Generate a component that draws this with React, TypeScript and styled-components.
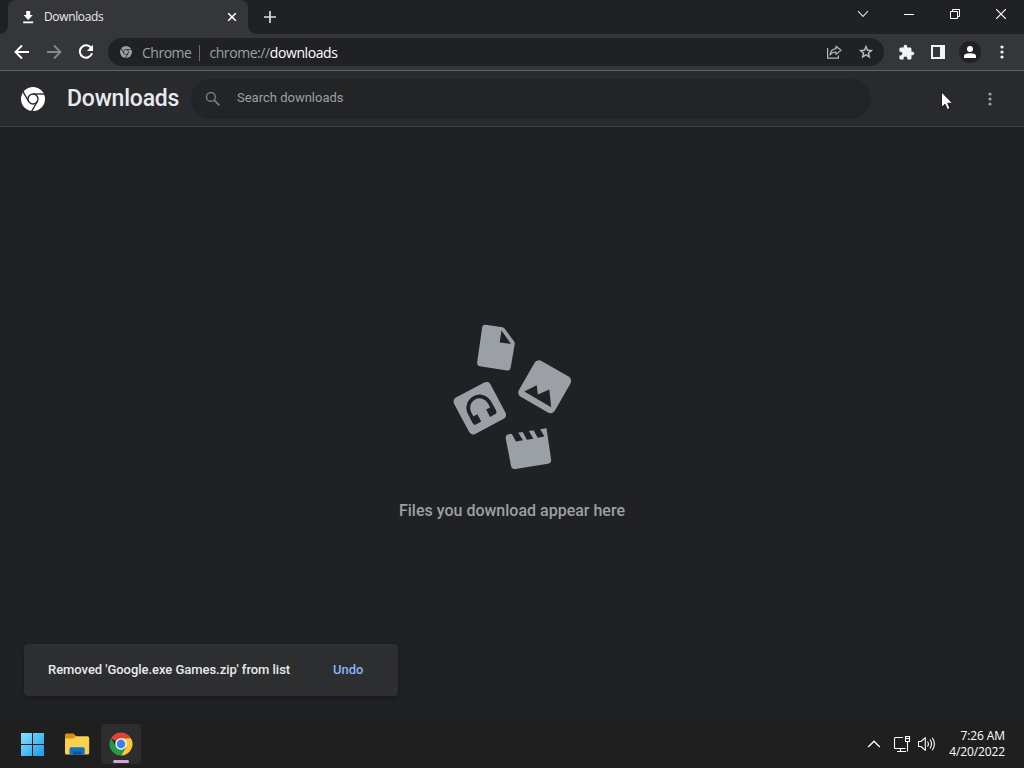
import React from 'react';
import styled, { createGlobalStyle } from 'styled-components';

const Global = createGlobalStyle`
  * { box-sizing: border-box; }
  html, body { margin: 0; background: #202124; overflow: hidden; }
  svg { display: block; flex: none; }
`;

const ui = `"Open Sans", "Noto Sans", sans-serif`;
const roboto = `Roboto, sans-serif`;

const Screen = styled.div`
  position: relative;
  display: flex;
  flex-direction: column;
  width: 1024px;
  height: 768px;
  overflow: hidden;
  background: #202124;
  color: #e8eaed;
`;

const TabStrip = styled.header`
  display: flex;
  height: 34px;
  padding-left: 8px;
  background: #202124;
`;

const Tab = styled.div`
  position: relative;
  display: flex;
  align-items: center;
  width: 240px;
  padding: 0 10px 0 14px;
  border-radius: 8px 8px 0 0;
  background: #35363a;
  font: 12px ${ui};

  &::before,
  &::after {
    content: '';
    position: absolute;
    bottom: 0;
    width: 8px;
    height: 8px;
  }
  &::before {
    left: -8px;
    background: radial-gradient(circle at 0 0, transparent 7.5px, #35363a 8px);
  }
  &::after {
    right: -8px;
    background: radial-gradient(circle at 100% 0, transparent 7.5px, #35363a 8px);
  }
`;

const TabTitle = styled.span`
  flex: 1;
  margin: -1px 0 0 9px;
  letter-spacing: -0.36px;
`;

const NewTab = styled.div`
  display: flex;
  align-items: center;
  margin-left: 14px;
`;

const WindowControls = styled.div`
  display: flex;
  align-items: center;
  height: 28px;
  margin-left: auto;
`;

const ControlButton = styled.div`
  display: flex;
  justify-content: center;
  width: 46px;
`;

const Toolbar = styled.div`
  display: flex;
  align-items: center;
  height: 37px;
  padding: 0 20px 0 14px;
  border-bottom: 1px solid #606164;
  background: #35363a;
`;

const Nav = styled.div`
  display: flex;
  gap: 16px;
`;

const Omnibox = styled.div`
  display: flex;
  align-items: center;
  width: 776px;
  height: 28px;
  margin-left: 14px;
  padding: 0 10px 0 12px;
  border-radius: 14px;
  background: #202124;
  color: #9aa0a6;
  font: 14px ${ui};
`;

const SiteName = styled.span`
  margin: 1px 0 0 10px;
  padding-right: 8px;
  border-right: 1px solid #6b6e72;
  line-height: 16px;
  letter-spacing: -0.5px;
`;

const Url = styled.span`
  flex: 1;
  margin: 1px 0 0 9px;
  line-height: 16px;
  letter-spacing: -0.42px;
  b { color: #fff; font-weight: 400; }
`;

const OmniboxActions = styled.div`
  display: flex;
  gap: 16px;
`;

const Extensions = styled.div`
  display: flex;
  align-items: center;
  gap: 15px;
  margin-left: 14px;
`;

const Avatar = styled.div`
  display: flex;
  align-items: center;
  justify-content: center;
  width: 22px;
  height: 22px;
  margin-left: -2px;
  border-radius: 50%;
  background: #202124;
`;

const PageHeader = styled.div`
  display: flex;
  align-items: center;
  height: 56px;
  padding: 0 32px 0 21px;
  border-bottom: 1px solid #3d3e41;
  background: #292a2d;
`;

const Title = styled.h1`
  width: 124px;
  margin: 0 0 0 22px;
  font: 500 23px/28px ${roboto};
  letter-spacing: -0.2px;
`;

const Search = styled.div`
  display: flex;
  align-items: center;
  width: 680px;
  height: 40px;
  padding-left: 14px;
  border-radius: 20px;
  background: #232426;
  color: #9aa0a6;
  font: 13px ${roboto};
`;

const SearchText = styled.span`
  margin: -3px 0 0 16px;
`;

const MenuSlot = styled.div`
  margin-left: auto;
`;

const Content = styled.main`
  display: flex;
  flex: 1;
  flex-direction: column;
  align-items: center;
  padding-top: 193px;
`;

const EmptyText = styled.p`
  margin: 26px 0 0;
  color: #9aa0a6;
  font: 500 16px/20px ${roboto};
`;

const Toast = styled.div`
  position: absolute;
  left: 24px;
  bottom: 72px;
  display: flex;
  align-items: center;
  width: 374px;
  height: 52px;
  padding: 0 24px 2px;
  border-radius: 4px;
  background: #2d2e30;
  box-shadow: 0 2px 5px rgba(0, 0, 0, 0.3);
  font: 500 13px ${roboto};
  white-space: nowrap;
`;

const ToastMessage = styled.span`
  width: 285px;
  letter-spacing: -0.04px;
`;

const Undo = styled.span`
  color: #8ab4f8;
`;

const Taskbar = styled.footer`
  display: flex;
  align-items: center;
  height: 48px;
  padding: 0 19px 0 13px;
  background: #1f1f1f;
`;

const TaskButton = styled.div<{ $active?: boolean }>`
  position: relative;
  display: flex;
  align-items: center;
  justify-content: center;
  width: 40px;
  height: 40px;
  margin-right: 4px;
  border-radius: 4px;
  background: ${(p) => (p.$active ? '#2d2d2d' : 'transparent')};

  &::after {
    content: '';
    display: ${(p) => (p.$active ? 'block' : 'none')};
    position: absolute;
    bottom: 1px;
    width: 16px;
    height: 3px;
    border-radius: 2px;
    background: #d5a2d8;
  }
`;

const Tray = styled.div`
  display: flex;
  align-items: center;
  gap: 12px;
  margin-left: auto;
`;

const Clock = styled.div`
  width: 58px;
  text-align: right;
  color: #fff;
  font: 12px/16px ${ui};
  letter-spacing: -0.12px;
`;

const Pointer = styled.svg`
  position: absolute;
  left: 940px;
  top: 91px;
`;

const MonoChrome = ({ size, fill, gap }: { size: number; fill: string; gap: string }) => (
  <svg width={size} height={size} viewBox="0 0 24 24">
    <circle cx="12" cy="12" r="12" fill={fill} />
    <g fill="none" stroke={gap} strokeWidth="1.4">
      <circle cx="12" cy="12" r="5" />
      {[0, 120, 240].map((a) => (
        <path key={a} d="M12 7H24" transform={`rotate(${a} 12 12)`} />
      ))}
    </g>
  </svg>
);

const Dots = ({ color }: { color: string }) => (
  <svg width="4" height="14" viewBox="0 0 4 14" fill={color}>
    <circle cx="2" cy="2" r="1.6" />
    <circle cx="2" cy="7" r="1.6" />
    <circle cx="2" cy="12" r="1.6" />
  </svg>
);

const Arrow = ({ color, flip }: { color: string; flip?: boolean }) => (
  <svg width="16" height="16" viewBox="0 0 16 16" fill="none" stroke={color} strokeWidth="1.9">
    <path d="M15 8H2.5M8 1.5L1.5 8L8 14.5" transform={flip ? 'rotate(180 8 8)' : undefined} />
  </svg>
);

const EmptyArt = () => (
  <svg width="124" height="155" viewBox="450 320 124 155" fill="#9aa0a6">
    <path
      d="M485.3 328L502 330.5L511.6 343.5L507.5 367.3L480.3 363Z"
      stroke="#9aa0a6"
      strokeWidth="6.4"
      strokeLinejoin="round"
    />
    <path d="M501.5 330.5L511 344L499.7 342.5Z" fill="#202124" />
    <rect x="524" y="366" width="41.4" height="41.4" rx="5" transform="rotate(30 544.7 386.7)" />
    <path d="M524.3 391.5L536.7 385.3L537.9 394.5L549.3 389.5L551.2 407.2Z" fill="#202124" />
    <g transform="translate(479.8 408.2) rotate(-28)">
      <rect x="-20.6" y="-20.6" width="41.2" height="41.2" rx="4.5" />
      <path d="M-11.3 10V-0.5A11.3 11.3 0 0 1 11.3 -0.5V10" fill="none" stroke="#202124" strokeWidth="3.7" />
      <path d="M-13.1 4.2H-5V12.5H-11Q-13.1 12.5 -13.1 10.3ZM13.1 4.2H5V12.5H11Q13.1 12.5 13.1 10.3Z" fill="#202124" />
    </g>
    <path d="M508.5 434.2L546.5 428.2L551.1 459.5Q551.5 463 548 463.7L515.3 469Q511.8 469.5 511 466L505.8 438.5Q505.3 435 508.5 434.2Z" />
    <path
      d="M511 432.5L517.5 431.5L523 440.3L516 441.6ZM522 430.8L528.2 429.8L533.3 438.8L526.8 439.8ZM533 429L539.5 428L544.4 436.6L537.7 437.8Z"
      fill="#202124"
    />
  </svg>
);

export default function App() {
  return (
    <Screen>
      <Global />
      <TabStrip>
        <Tab>
          <svg width="13" height="13" viewBox="0 0 13 13" fill="#fff">
            <path d="M4.2 0H8.2V4H10.8L6.2 8.9L1.6 4H4.2ZM1.2 10.6H11.2V12.2H1.2Z" />
          </svg>
          <TabTitle>Downloads</TabTitle>
          <svg width="12" height="12" viewBox="0 0 12 12" stroke="#fff" strokeWidth="1.6">
            <path d="M2.2 2.2L9.8 9.8M9.8 2.2L2.2 9.8" />
          </svg>
        </Tab>
        <NewTab>
          <svg width="16" height="16" viewBox="0 0 16 16" stroke="#dadce0" strokeWidth="1.7">
            <path d="M8 2V14M2 8H14" />
          </svg>
        </NewTab>
        <WindowControls>
          <ControlButton>
            <svg width="12" height="12" viewBox="0 0 12 12" fill="none" stroke="#dadce0" strokeWidth="1.1">
              <path d="M1 3.2L6 8.5L11 3.2" />
            </svg>
          </ControlButton>
          <ControlButton>
            <svg width="10" height="10" viewBox="0 0 10 10" fill="#fff">
              <path d="M0 5H10V6H0Z" />
            </svg>
          </ControlButton>
          <ControlButton>
            <svg width="10" height="10" viewBox="0 0 10 10" fill="none" stroke="#fff">
              <path d="M0.5 2.5H7.5V9.5H0.5ZM2.5 2.5V0.5H9.5V7.5H7.5" />
            </svg>
          </ControlButton>
          <ControlButton>
            <svg width="10" height="10" viewBox="0 0 10 10" stroke="#fff" strokeWidth="1.2">
              <path d="M0 0L10 10M10 0L0 10" />
            </svg>
          </ControlButton>
        </WindowControls>
      </TabStrip>

      <Toolbar>
        <Nav>
          <Arrow color="#fff" />
          <Arrow color="#85878a" flip />
          <svg width="16" height="16" viewBox="0 0 16 16">
            <path d="M13.3 4.2A6.2 6.2 0 1 0 14 9.3" fill="none" stroke="#fff" strokeWidth="2" />
            <path d="M15 0.8V7H8.8Z" fill="#fff" />
          </svg>
        </Nav>
        <Omnibox>
          <MonoChrome size={12} fill="#9aa0a6" gap="#202124" />
          <SiteName>Chrome</SiteName>
          <Url>
            chrome://<b>downloads</b>
          </Url>
          <OmniboxActions>
            <svg width="16" height="16" viewBox="0 0 16 16" fill="none" stroke="#b4b7bb" strokeWidth="1.2">
              <path d="M1.6 4V14.2H12.4V11.5" />
              <path d="M10 2.2L15 6.3L10 10.4V8Q6.2 7.8 4 11Q4.6 5.4 10 4.7Z" strokeLinejoin="round" />
            </svg>
            <svg width="16" height="16" viewBox="0 0 24 24" fill="#c4c7cb">
              <path d="M22 9.24l-7.19-.62L12 2 9.19 8.63 2 9.24l5.46 4.73L5.82 21 12 17.27 18.18 21l-1.63-7.03L22 9.24zM12 15.4l-3.76 2.27 1-4.28-3.32-2.88 4.38-.38L12 6.1l1.71 4.04 4.38.38-3.32 2.88 1 4.28L12 15.4z" stroke="#c4c7cb" strokeWidth="0.5" />
            </svg>
          </OmniboxActions>
        </Omnibox>
        <Extensions>
          <svg width="17" height="17" viewBox="0 0 24 24" fill="#f1f3f4">
            <path d="M20.5 11H19V7c0-1.1-.9-2-2-2h-4V3.5a2.5 2.5 0 0 0-5 0V5H4c-1.1 0-1.99.9-1.99 2v3.8H3.5c1.49 0 2.7 1.21 2.7 2.7s-1.21 2.7-2.7 2.7H2V20c0 1.1.9 2 2 2h3.8v-1.5c0-1.49 1.21-2.7 2.7-2.7s2.7 1.21 2.7 2.7V22H17c1.1 0 2-.9 2-2v-4h1.5a2.5 2.5 0 0 0 0-5z" />
          </svg>
          <svg width="16" height="16" viewBox="0 0 16 16" fill="#f1f3f4">
            <path fillRule="evenodd" d="M1 1H15V15H1ZM3 3V13H10V3Z" />
          </svg>
          <Avatar>
            <svg width="14" height="14" viewBox="0 0 14 14" fill="#fff">
              <circle cx="7" cy="4" r="3" />
              <path d="M1 13V11Q1 8.2 7 8.2Q13 8.2 13 11V13Z" />
            </svg>
          </Avatar>
        </Extensions>
        <MenuSlot>
          <Dots color="#f1f3f4" />
        </MenuSlot>
      </Toolbar>

      <PageHeader>
        <MonoChrome size={24} fill="#fff" gap="#292a2d" />
        <Title>Downloads</Title>
        <Search>
          <svg width="16" height="16" viewBox="0 0 16 16" fill="none" stroke="#777a7e">
            <circle cx="5.9" cy="5.9" r="4.4" strokeWidth="1.5" />
            <path d="M9.2 9.2L14.4 14.4" strokeWidth="1.9" />
          </svg>
          <SearchText>Search downloads</SearchText>
        </Search>
        <MenuSlot>
          <Dots color="#9aa0a6" />
        </MenuSlot>
      </PageHeader>

      <Content>
        <EmptyArt />
        <EmptyText>Files you download appear here</EmptyText>
      </Content>

      <Toast>
        <ToastMessage>Removed 'Google.exe Games.zip' from list</ToastMessage>
        <Undo>Undo</Undo>
      </Toast>

      <Taskbar>
        <TaskButton>
          <svg width="24" height="24" viewBox="0 0 24 24">
            <defs>
              <linearGradient id="win" x1="0" y1="0" x2="24" y2="24" gradientUnits="userSpaceOnUse">
                <stop stopColor="#8be3fc" />
                <stop offset="1" stopColor="#159be8" />
              </linearGradient>
            </defs>
            <path d="M0 1H11V12H0ZM12 1H23V12H12ZM0 13H11V24H0ZM12 13H23V24H12Z" fill="url(#win)" />
          </svg>
        </TaskButton>
        <TaskButton>
          <svg width="26" height="24" viewBox="0 0 26 24">
            <path d="M1 3Q1 1.5 2.5 1.5H9.5L12.5 4.5V9H1Z" fill="#d9920e" />
            <path d="M1 6.5H9.5L12 4.3H23.5Q25.2 4.3 25.2 6V21Q25.2 22.5 23.5 22.5H2.5Q1 22.5 1 21Z" fill="#fbd04c" />
            <path d="M5.5 22.5V17Q5.5 15.3 7.2 15.3H19Q20.7 15.3 20.7 17V22.5Z" fill="#1273c4" />
            <path d="M9 22.5V19.5H17.3V22.5Z" fill="#0b559c" />
          </svg>
        </TaskButton>
        <TaskButton $active>
          <svg width="24" height="24" viewBox="0 0 24 24">
            <path d="M12 12L2.04 6.25A11.5 11.5 0 0 1 21.96 6.25H12Z" fill="#db4437" />
            <path d="M12 6.25H21.96A11.5 11.5 0 0 1 12 23.5L17 14.9Z" fill="#fbc62f" />
            <path d="M2.04 6.25A11.5 11.5 0 0 0 12 23.5L17 14.9L12 12L7 14.9Z" fill="#25994b" />
            <circle cx="12" cy="12" r="5.75" fill="#fff" />
            <circle cx="12" cy="12" r="4.4" fill="#3f7fe8" />
          </svg>
        </TaskButton>
        <Tray>
          <svg width="14" height="16" viewBox="0 0 14 16" fill="none" stroke="#fff" strokeWidth="1.3">
            <path d="M1.2 11L7 5.2L12.8 11" />
          </svg>
          <svg width="42" height="18" viewBox="893 735 42 18" fill="none" stroke="#fff" strokeWidth="1.1">
            <path d="M903 737.5H895.5Q894.5 737.5 894.5 738.5V747.5Q894.5 748.5 895.5 748.5H905.5M900.5 748.5V751.5M897 751.5H906M905.5 736.5H909.5V741.5H905.5ZM907.5 741.5V751.5M905.5 738.5H909.5" />
            <path d="M918.5 741.5H921L925.3 737.7V750.3L921 746.5H918.5Z" strokeLinejoin="round" />
            <path d="M927.5 741.5Q929.3 744 927.5 746.5M930 739.5Q933 744 930 748.5M932.3 737.7Q936.5 744 932.3 750.3" />
          </svg>
          <Clock>
            7:26 AM
            <br />
            4/20/2022
          </Clock>
        </Tray>
      </Taskbar>

      <Pointer width="14" height="20" viewBox="0 0 14 20">
        <path d="M1.5 1V16.5L5 13.2L7.4 18.5L10 17.4L7.7 12.2H12.5Z" fill="#fff" stroke="#000" strokeWidth="0.8" />
      </Pointer>
    </Screen>
  );
}
